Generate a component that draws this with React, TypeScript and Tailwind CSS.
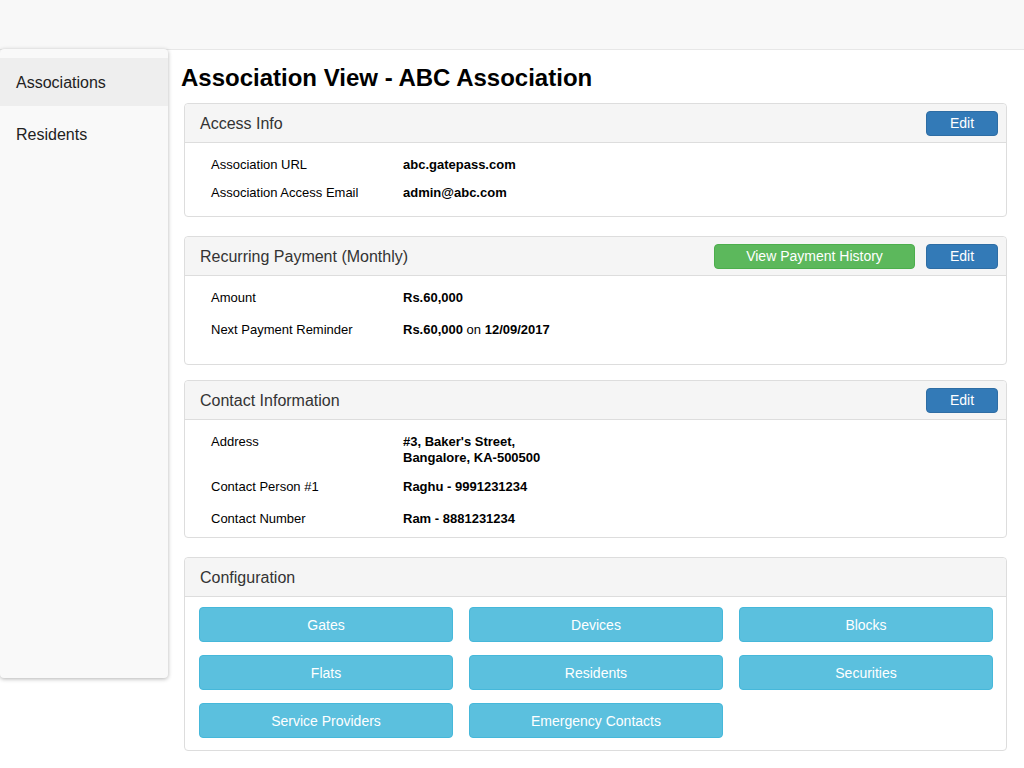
import React from "react";

const font = { fontFamily: '"Liberation Sans", Arial, sans-serif' };

function Header({ title, children }: { title: string; children?: React.ReactNode }) {
  return (
    <div className="flex h-[39px] items-center justify-between border-b border-[#ddd] bg-[#f5f5f5] pl-[15px] pr-[8px] rounded-t-[4px]">
      <span className="block pt-[2px] text-[16px] text-[#333]">{title}</span>
      <div className="flex gap-[11px]">{children}</div>
    </div>
  );
}

function EditBtn() {
  return (
    <button className="h-[25px] w-[72px] rounded-[4px] border border-[#2e6da4] bg-[#337ab7] text-[14px] text-white">
      Edit
    </button>
  );
}

function Row({ label, children, className = "" }: { label: string; children: React.ReactNode; className?: string }) {
  return (
    <div className={"flex text-[13px] leading-[16px] text-black " + className}>
      <div className="w-[192px] shrink-0">{label}</div>
      <div className="font-bold">{children}</div>
    </div>
  );
}

export default function App() {
  const cfg = ["Gates", "Devices", "Blocks", "Flats", "Residents", "Securities", "Service Providers", "Emergency Contacts"];
  return (
    <div style={font} className="h-[768px] w-[1024px] overflow-hidden bg-white">
      <div className="h-[50px] border-b border-[#e7e7e7] bg-[#f8f8f8]" />
      <div className="flex">
        <div className="-mt-[1px] h-[629px] w-[168px] shrink-0 rounded-[4px] bg-[#f9f9f9] pt-[9px] shadow-[0_1px_4px_rgba(0,0,0,0.3)]">
          <div className="flex h-[48px] items-center bg-[#eeeeee] pl-[16px] pt-[2px] text-[16px] text-[#222]">Associations</div>
          <div className="mt-[4px] flex h-[48px] items-center pl-[16px] pt-[2px] text-[16px] text-[#222]">Residents</div>
        </div>
        <div className="flex-1 pl-[13px] pr-[17px]">
          <h1 className="mt-[15px] text-[24px] font-bold leading-[26px] text-black">Association View - ABC Association</h1>
          <div className="pl-[3px]">
            <div className="mt-[12px] rounded-[4px] border border-[#ddd]">
              <Header title="Access Info">
                <EditBtn />
              </Header>
              <div className="pl-[26px] pt-[14px] pb-[15px]">
                <Row label="Association URL">abc.gatepass.com</Row>
                <Row label="Association Access Email" className="mt-[12px]">admin@abc.com</Row>
              </div>
            </div>

            <div className="mt-[19px] rounded-[4px] border border-[#ddd]">
              <Header title="Recurring Payment (Monthly)">
                <button className="h-[25px] w-[201px] rounded-[4px] border border-[#4cae4c] bg-[#5cb85c] text-[14px] text-white">
                  View Payment History
                </button>
                <EditBtn />
              </Header>
              <div className="pl-[26px] pt-[14px] pb-[26px]">
                <Row label="Amount">Rs.60,000</Row>
                <Row label="Next Payment Reminder" className="mt-[16px]">
                  Rs.60,000 <span className="font-normal">on</span> 12/09/2017
                </Row>
              </div>
            </div>

            <div className="mt-[15px] rounded-[4px] border border-[#ddd]">
              <Header title="Contact Information">
                <EditBtn />
              </Header>
              <div className="pl-[26px] pt-[14px] pb-[10px]">
                <Row label="Address">
                  #3, Baker's Street,
                  <br />
                  Bangalore, KA-500500
                </Row>
                <Row label="Contact Person #1" className="mt-[13px]">Raghu - 9991231234</Row>
                <Row label="Contact Number" className="mt-[16px]">Ram - 8881231234</Row>
              </div>
            </div>

            <div className="mt-[19px] rounded-[4px] border border-[#ddd]">
              <Header title="Configuration" />
              <div className="grid grid-cols-[254px_254px_254px] gap-x-[16px] gap-y-[13px] pl-[14px] pt-[10px] pb-[12px]">
                {cfg.map((c) => (
                  <button
                    key={c}
                    className="h-[35px] rounded-[4px] border border-[#46b8da] bg-[#5bc0de] pt-[2px] text-[14px] text-white"
                  >
                    {c}
                  </button>
                ))}
              </div>
            </div>
          </div>
        </div>
      </div>
    </div>
  );
}
